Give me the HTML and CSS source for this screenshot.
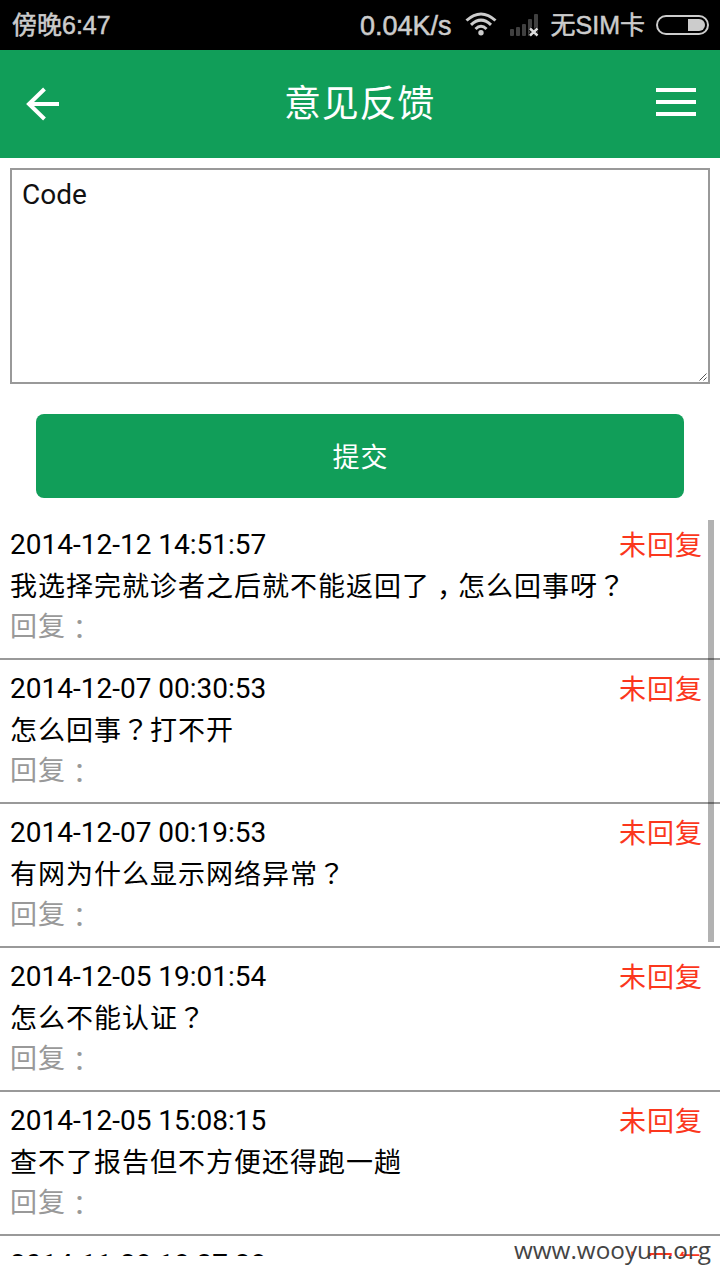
FILE: index.html
```html
<!DOCTYPE html>
<html lang="zh-CN">
<head>
    <meta charset="UTF-8">
    <meta name="viewport" content="width=device-width, initial-scale=1.0">
    <title>意见反馈</title>
    <link rel="stylesheet" href="styles.css">
</head>
<body>

    <!-- Status bar -->
    <div class="status-bar">
        <span class="status-time">傍晚6:47</span>
        <span class="status-speed">0.04K/s</span>
        <svg class="icon-wifi" width="32" height="24" viewBox="0 0 32 24">
            <g fill="none" stroke="#ccc" stroke-width="3">
                <path d="M1.500 8.500Q16 -4.500 30.500 8.500"/>
                <path d="M6 12.800Q16 3.500 26 12.800"/>
                <path d="M10.500 17Q16 11.500 21.500 17"/>
            </g>
            <circle cx="16" cy="20.700" r="2.700" fill="#ccc"/>
        </svg>
        <svg class="icon-signal" width="30" height="24" viewBox="0 0 30 24">
            <g fill="#404040">
                <rect x="0" y="16" width="4" height="7" rx="1"/>
                <rect x="6" y="14" width="4" height="9" rx="1"/>
                <rect x="12" y="11" width="4" height="12" rx="1"/>
                <rect x="18" y="6" width="4" height="17" rx="1"/>
                <rect x="24" y="1" width="4" height="22" rx="1"/>
            </g>
            <path d="M20 15.500L27.500 22.500M27.500 15.500L20 22.500" stroke="#000" stroke-width="4"/>
            <path d="M20 15.500L27.500 22.500M27.500 15.500L20 22.500" stroke="#ddd" stroke-width="2.400"/>
        </svg>
        <span class="status-sim">无SIM卡</span>
        <svg class="icon-battery" width="53" height="20" viewBox="0 0 53 20">
            <rect x="1" y="1" width="51" height="18" rx="9" fill="none" stroke="#ccc" stroke-width="2"/>
            <path d="M32 4H43A6 6 0 0 1 43 16H32Z" fill="#ccc"/>
        </svg>
    </div>

    <!-- Header -->
    <div class="header">
        <svg width="34" height="34" viewBox="0 0 34 34">
            <path d="M18.500 2L3 17L18.500 32M2.500 17H33" fill="none" stroke="#fff" stroke-width="4"/>
        </svg>
        <h1>意见反馈</h1>
        <svg width="40" height="30" viewBox="0 0 40 30">
            <path d="M0 3H40M0 15H40M0 27H40" stroke="#fff" stroke-width="4"/>
        </svg>
    </div>

    <div class="content">
        <div class="feedback-form">
            <div class="feedback-input">Code
                <svg class="resize-grip" width="8" height="8" viewBox="0 0 8 8">
                    <path d="M0.500 7.500L7.500 0.500M4.500 7.500L7.500 4.500" stroke="#555" stroke-width="1"/>
                </svg>
            </div>
            <button class="submit-button">提交</button>
        </div>

        <div class="feedback-list">
            <div class="feedback-item">
                <div class="item-top"><span>2014-12-12 14:51:57</span><span class="state">未回复</span></div>
                <div class="question">我选择完就诊者之后就不能返回了<span class="punct comma" lang="zh-TW">，</span>怎么回事呀<span class="punct" lang="zh-TW">？</span></div>
                <div class="reply">回复<span class="punct colon" lang="zh-TW">：</span></div>
            </div>
            <div class="feedback-item">
                <div class="item-top"><span>2014-12-07 00:30:53</span><span class="state">未回复</span></div>
                <div class="question">怎么回事<span class="punct" lang="zh-TW">？</span>打不开</div>
                <div class="reply">回复<span class="punct colon" lang="zh-TW">：</span></div>
            </div>
            <div class="feedback-item">
                <div class="item-top"><span>2014-12-07 00:19:53</span><span class="state">未回复</span></div>
                <div class="question">有网为什么显示网络异常<span class="punct" lang="zh-TW">？</span></div>
                <div class="reply">回复<span class="punct colon" lang="zh-TW">：</span></div>
            </div>
            <div class="feedback-item">
                <div class="item-top"><span>2014-12-05 19:01:54</span><span class="state">未回复</span></div>
                <div class="question">怎么不能认证<span class="punct" lang="zh-TW">？</span></div>
                <div class="reply">回复<span class="punct colon" lang="zh-TW">：</span></div>
            </div>
            <div class="feedback-item">
                <div class="item-top"><span>2014-12-05 15:08:15</span><span class="state">未回复</span></div>
                <div class="question">查不了报告但不方便还得跑一趟</div>
                <div class="reply">回复<span class="punct colon" lang="zh-TW">：</span></div>
            </div>
            <div class="feedback-item">
                <div class="item-top"><span>2014-11-28 18:37:28</span><span class="state">未回复</span></div>
            </div>
            <div class="scrollbar"></div>
        </div>
    </div>

    <div class="watermark">www.wooyun.org</div>

</body>
</html>
```
FILE: styles.css
```css
* {
    box-sizing: border-box;
}
body {
    font-family: Roboto, "Noto Sans CJK SC", sans-serif;
    margin: 0;
    height: 1280px;
    overflow: hidden;
    position: relative;
    background-color: #fff;
    color: #000;
    font-size: 28px;
}
.status-bar {
    display: flex;
    align-items: center;
    height: 50px;
    padding: 0 11px 0 12px;
    background-color: #000;
    color: #ccc;
    font-family: "Liberation Sans", "Noto Sans CJK SC", sans-serif;
    font-size: 25px;
    line-height: 50px;
    white-space: nowrap;
    -webkit-text-stroke: 0.5px #ccc;
}
.status-time {
    margin-right: auto;
    font-size: 25px;
}
.status-speed {
    padding-top: 2px;
    font-size: 27px;
}
.icon-wifi {
    margin: 0 0 2px 13px;
}
.icon-signal {
    margin: 0 11px 0 13px;
}
.icon-battery {
    margin-left: 11px;
}
.header {
    display: flex;
    align-items: center;
    justify-content: space-between;
    height: 108px;
    padding: 0 24px 0 26px;
    background-color: #119e59;
}
.header h1 {
    margin: 1px 0 0 3px;
    color: #fff;
    font-size: 37px;
    letter-spacing: 0.8px;
    font-weight: normal;
    line-height: 56px;
}
.header svg {
    flex: none;
}
.header svg:last-child {
    margin-bottom: 4px;
}
.content {
    height: 1098px;
    overflow: hidden;
}
.feedback-form {
    height: 358px;
    padding: 10px;
}
.feedback-input {
    position: relative;
    height: 216px;
    padding: 8px 10px;
    border: 2px solid #999;
    color: #111;
    line-height: 33px;
}
.resize-grip {
    position: absolute;
    right: 1px;
    bottom: 1px;
}
.submit-button {
    display: block;
    width: 648px;
    height: 84px;
    margin: 30px auto 0;
    padding: 4px 0 0 1px;
    border: none;
    border-radius: 8px;
    background-color: #119e59;
    color: #fff;
    font-family: inherit;
    font-size: 27px;
    letter-spacing: 1px;
    line-height: 80px;
}
.feedback-list {
    position: relative;
}
.feedback-item {
    height: 144px;
    padding: 9px 17px 0 10px;
    border-bottom: 2px solid #999;
}
.item-top {
    display: flex;
    justify-content: space-between;
    line-height: 40px;
    height: 42px;
}
.state {
    padding-top: 1px;
    color: #fb371d;
    font-size: 27px;
    letter-spacing: 1px;
}
.question {
    height: 40px;
    font-size: 27px;
    letter-spacing: 1px;
    line-height: 40px;
    white-space: nowrap;
}
.reply {
    color: #999;
    font-size: 27px;
    letter-spacing: 1px;
    line-height: 40px;
}
.punct {
    font-family: "Noto Sans CJK TC", sans-serif;
    line-height: 0;
}
.comma {
    vertical-align: -9px;
}
.colon {
    vertical-align: -3px;
}
.scrollbar {
    position: absolute;
    top: 4px;
    right: 6px;
    width: 6px;
    height: 422px;
    background-color: rgba(0, 0, 0, 0.3);
}
.watermark {
    position: absolute;
    right: 9px;
    bottom: 13px;
    color: #444;
    font-family: "Open Sans", sans-serif;
    font-size: 24.3px;
    line-height: 34px;
}
```
